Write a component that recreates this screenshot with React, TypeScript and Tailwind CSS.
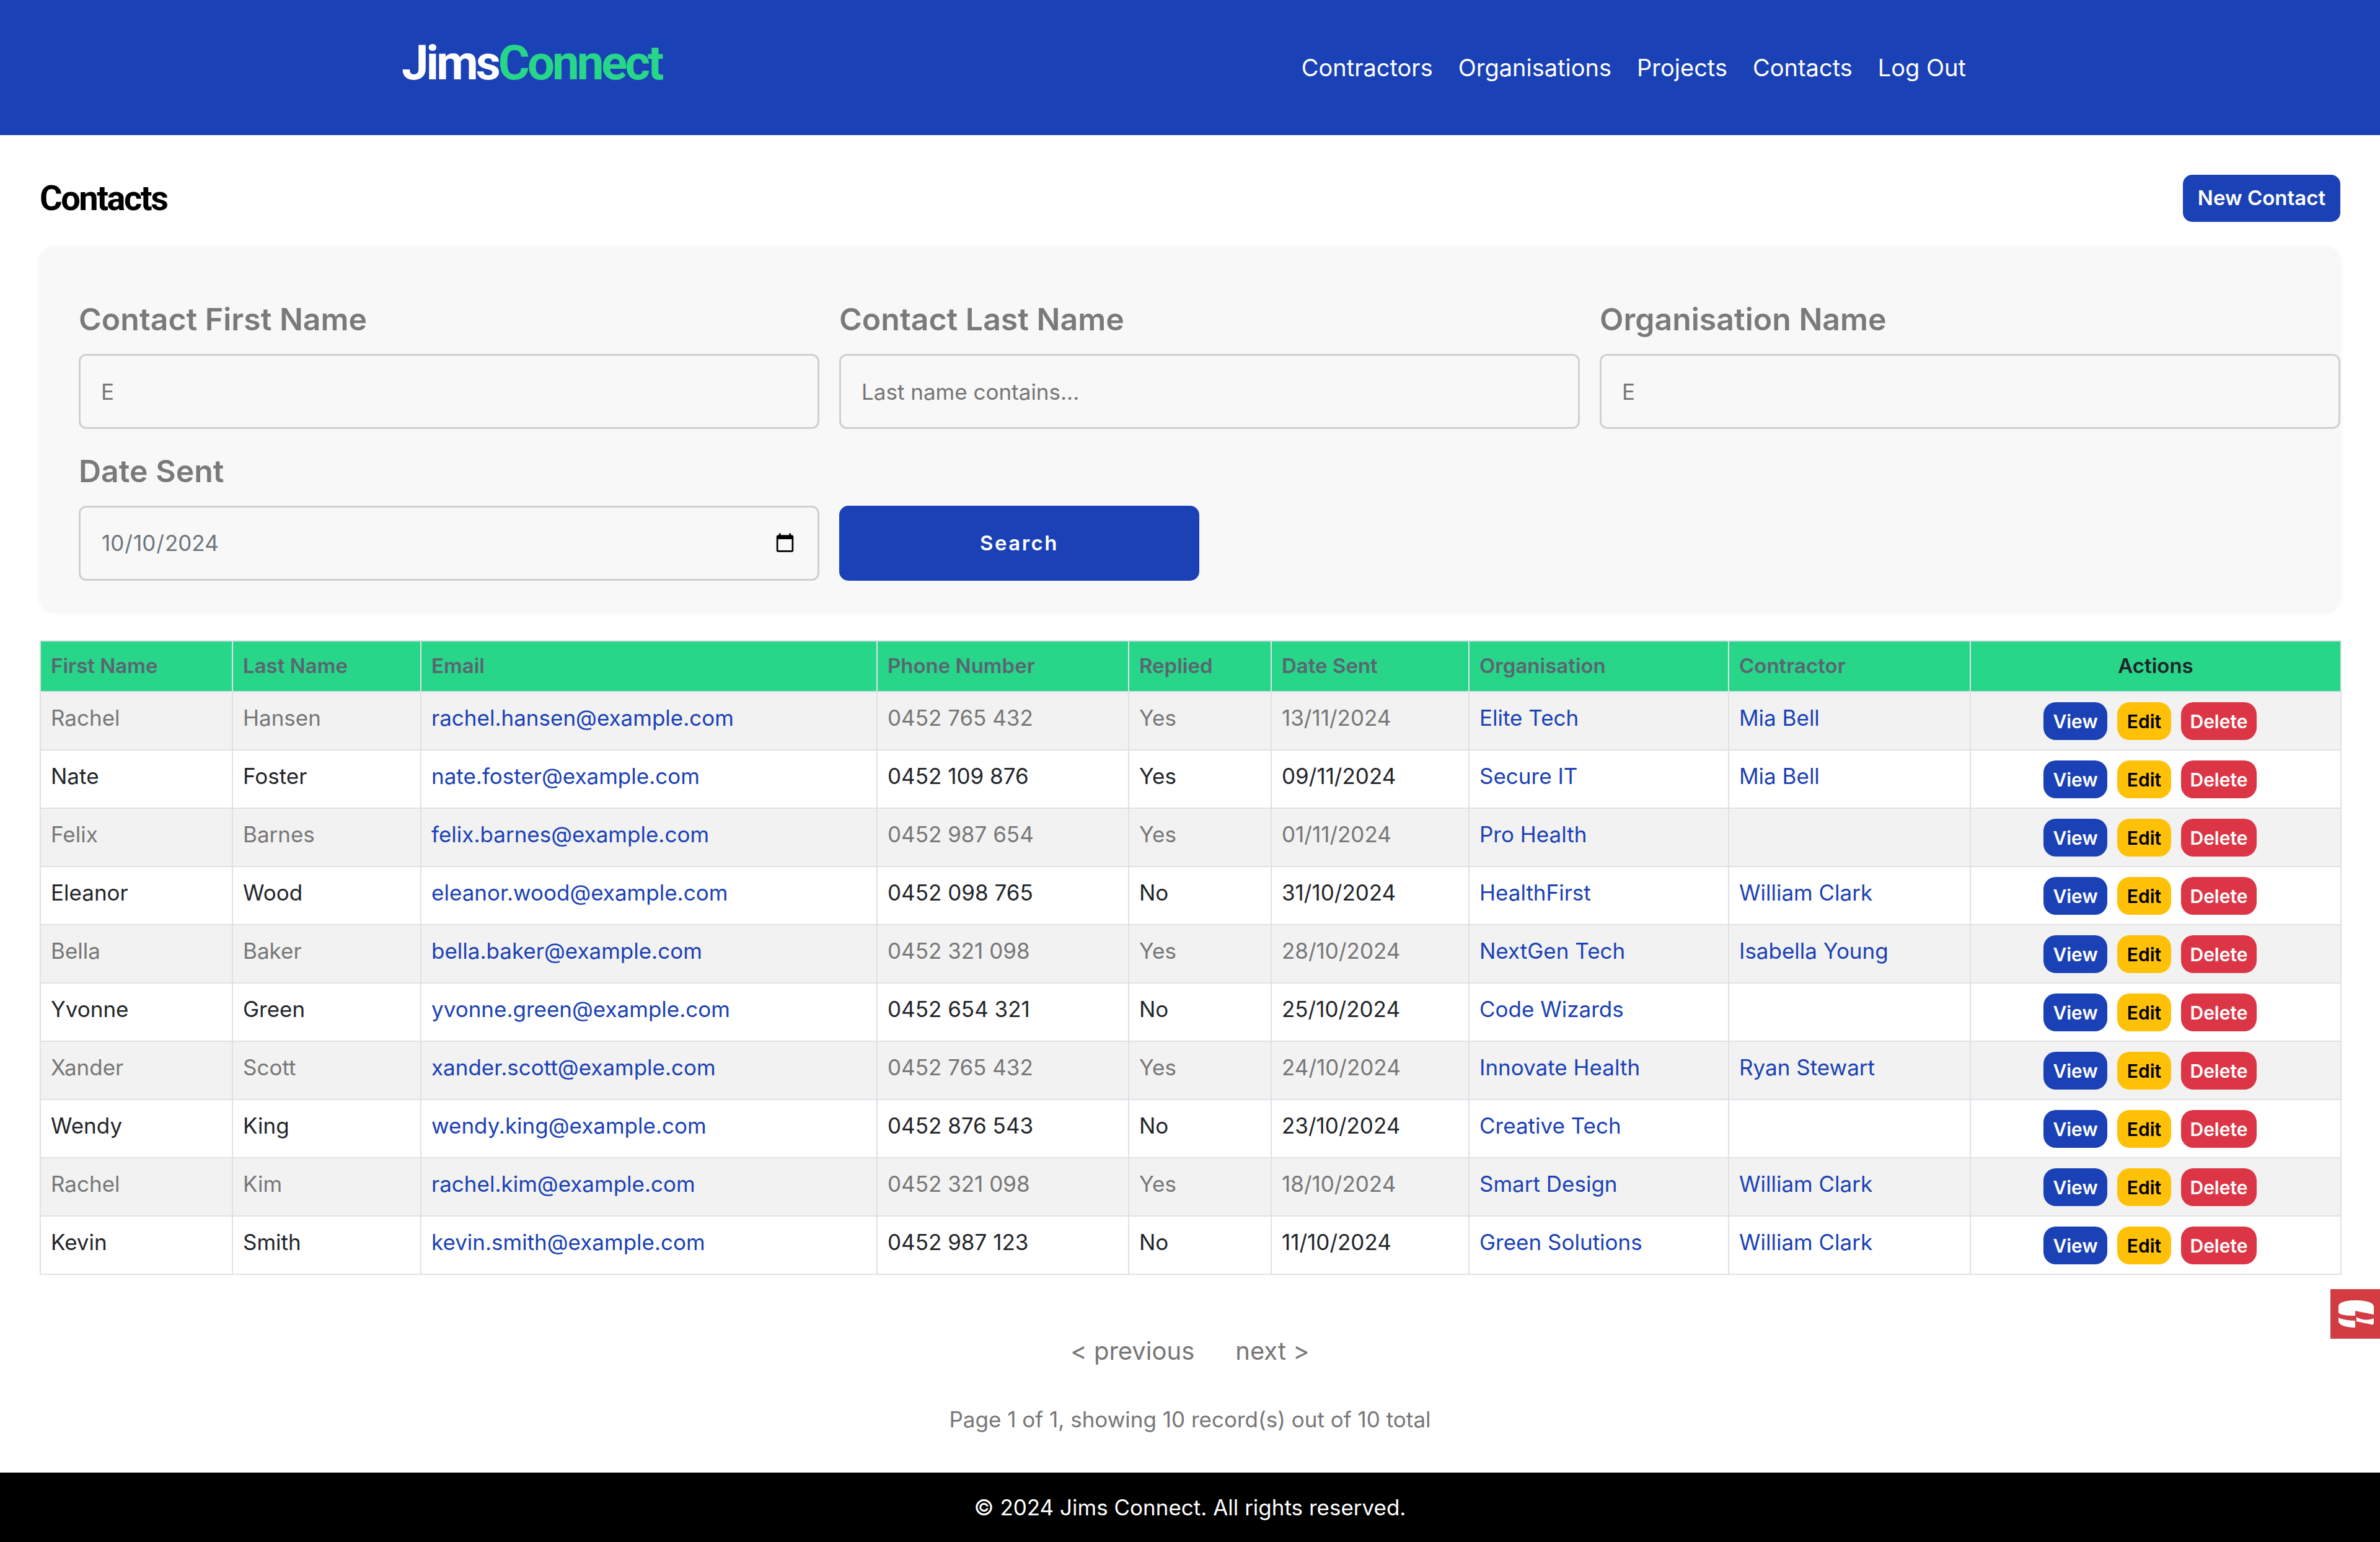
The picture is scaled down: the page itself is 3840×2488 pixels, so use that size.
import React from "react";

const rows = [
  ["Rachel", "Hansen", "rachel.hansen@example.com", "0452 765 432", "Yes", "13/11/2024", "Elite Tech", "Mia Bell"],
  ["Nate", "Foster", "nate.foster@example.com", "0452 109 876", "Yes", "09/11/2024", "Secure IT", "Mia Bell"],
  ["Felix", "Barnes", "felix.barnes@example.com", "0452 987 654", "Yes", "01/11/2024", "Pro Health", ""],
  ["Eleanor", "Wood", "eleanor.wood@example.com", "0452 098 765", "No", "31/10/2024", "HealthFirst", "William Clark"],
  ["Bella", "Baker", "bella.baker@example.com", "0452 321 098", "Yes", "28/10/2024", "NextGen Tech", "Isabella Young"],
  ["Yvonne", "Green", "yvonne.green@example.com", "0452 654 321", "No", "25/10/2024", "Code Wizards", ""],
  ["Xander", "Scott", "xander.scott@example.com", "0452 765 432", "Yes", "24/10/2024", "Innovate Health", "Ryan Stewart"],
  ["Wendy", "King", "wendy.king@example.com", "0452 876 543", "No", "23/10/2024", "Creative Tech", ""],
  ["Rachel", "Kim", "rachel.kim@example.com", "0452 321 098", "Yes", "18/10/2024", "Smart Design", "William Clark"],
  ["Kevin", "Smith", "kevin.smith@example.com", "0452 987 123", "No", "11/10/2024", "Green Solutions", "William Clark"],
];

const heads = ["First Name", "Last Name", "Email", "Phone Number", "Replied", "Date Sent", "Organisation", "Contractor"];
const widths = [310, 304, 736, 406, 230, 319, 419, 390, 598];

const labelCls = "block h-[60px] mb-[26px] text-[50px] leading-[60px] font-semibold text-[#7a7a7a]";
const inputCls =
  "w-full h-[121px] px-[33px] border-[3px] border-[#d0d0d0] rounded-[12px] bg-[#f8f8f8] text-[35px] text-[#6c757d] placeholder:text-[#757575] outline-none";

function Field({ label, placeholder, value }: { label: string; placeholder: string; value?: string }) {
  return (
    <div>
      <label className={labelCls}>{label}</label>
      <input className={inputCls} placeholder={placeholder} defaultValue={value} />
    </div>
  );
}

function Cake() {
  return (
    <svg viewBox="0 0 80 80" className="w-full h-full" fill="#fff">
      <path d="M13 28C13 21 26 18 41 18C56 18 70 21 70 28V41L40 35V43C25 43 13 41 13 37Z" />
      <path d="M13 46C18 49 30 50.5 40 51V62C25 62 13 58 13 51Z" />
      <path d="M42 45C50 50 62 51 70 47V54C70 57 68 58 66 57L42 52Z" />
    </svg>
  );
}

export default function App() {
  return (
    <div className="flex flex-col h-[2488px] bg-white font-['Inter',sans-serif] text-[35px] text-[#212529] relative overflow-hidden">
      <header className="h-[218px] shrink-0 bg-[#1a41b5] flex items-center justify-between pl-[648px] pr-[668px]">
        <div className="font-['Roboto',sans-serif] font-bold text-[78px] leading-none tracking-[-4px] -mt-[14px]">
          <span className="text-white">Jims</span>
          <span className="text-[#28d68a]">Connect</span>
        </div>
        <nav className="flex gap-[41px] text-[38px] text-white">
          <span>Contractors</span>
          <span>Organisations</span>
          <span>Projects</span>
          <span>Contacts</span>
          <span>Log Out</span>
        </nav>
      </header>

      <main className="flex-1 px-[64px] pt-[64px]">
        <div className="flex items-center justify-between h-[76px] mb-[39px]">
          <h1 className="font-['Roboto',sans-serif] font-bold text-[56px] tracking-[-2.5px] text-black">Contacts</h1>
          <button className="h-[76px] w-[254px] rounded-[15px] bg-[#1a41b5] text-white text-[33px] font-semibold">New Contact</button>
        </div>

        <section className="bg-[#f8f8f8] rounded-[25px] shadow-[0_3px_8px_rgba(0,0,0,0.06)] pl-[63px] pt-[88px] pb-[48px]">
          <div className="grid grid-cols-[1195px_1195px_1195px] gap-x-[32px] gap-y-[38px]">
            <Field label="Contact First Name" placeholder="E" />
            <Field label="Contact Last Name" placeholder="Last name contains..." />
            <Field label="Organisation Name" placeholder="E" />
            <div>
              <label className={labelCls}>Date Sent</label>
              <input type="date" defaultValue="2024-10-10" className={inputCls} />
            </div>
            <div className="pt-[86px]">
              <button className="h-[121px] w-[581px] rounded-[15px] bg-[#1a41b5] text-white text-[33px] font-semibold tracking-[2.5px]">Search</button>
            </div>
          </div>
        </section>

        <table className="mt-[48px] w-[3712px] table-fixed border-collapse">
          <colgroup>
            {widths.map((w, i) => (
              <col key={i} style={{ width: w }} />
            ))}
          </colgroup>
          <thead>
            <tr className="h-[82px] bg-[#28d68a]">
              {heads.map((h) => (
                <th key={h} className="border-2 border-[#dee2e6] px-[16px] text-left text-[33px] font-semibold text-[#5a6570]">{h}</th>
              ))}
              <th className="border-2 border-[#dee2e6] px-[16px] text-center text-[33px] font-semibold text-[#212529]">Actions</th>
            </tr>
          </thead>
          <tbody>
            {rows.map((r, i) => {
              const odd = i % 2 === 0;
              const txt = odd ? "text-[#777777]" : "text-[#212529]";
              const td = `border-2 border-[#dee2e6] px-[16px] pt-[16px] align-top h-[94px] leading-[50px] whitespace-nowrap overflow-hidden `;
              return (
                <tr key={i} className={odd ? "bg-[#f2f2f2]" : "bg-white"}>
                  <td className={td + txt}>{r[0]}</td>
                  <td className={td + txt}>{r[1]}</td>
                  <td className={td + "text-[#1a41b5]"}>{r[2]}</td>
                  <td className={td + txt}>{r[3]}</td>
                  <td className={td + txt}>{r[4]}</td>
                  <td className={td + txt}>{r[5]}</td>
                  <td className={td + "text-[#1a41b5]"}>{r[6]}</td>
                  <td className={td + "text-[#1a41b5]"}>{r[7]}</td>
                  <td className={td}>
                    <div className="flex justify-center gap-[16px] pr-[18px] text-[30px] font-semibold leading-none">
                      <span className="h-[61px] w-[103px] rounded-[20px] bg-[#1a41b5] text-white flex items-center justify-center">View</span>
                      <span className="h-[61px] w-[87px] rounded-[20px] bg-[#ffc107] text-black flex items-center justify-center">Edit</span>
                      <span className="h-[61px] w-[122px] rounded-[20px] bg-[#dc3545] text-white flex items-center justify-center">Delete</span>
                    </div>
                  </td>
                </tr>
              );
            })}
          </tbody>
        </table>

        <div className="mt-[98px] flex justify-center gap-[66px] text-[40px] leading-[50px] text-[#777777]">
          <span>&lt; previous</span>
          <span>next &gt;</span>
        </div>
        <p className="mt-[60px] text-center leading-[50px] text-[#777777]">Page 1 of 1, showing 10 record(s) out of 10 total</p>
      </main>

      <footer className="h-[112px] shrink-0 bg-black text-white flex items-center justify-center">
        © 2024 Jims Connect. All rights reserved.
      </footer>

      <div className="absolute right-0 top-[2080px] w-[80px] h-[80px] bg-[#d33c43]">
        <Cake />
      </div>
    </div>
  );
}
